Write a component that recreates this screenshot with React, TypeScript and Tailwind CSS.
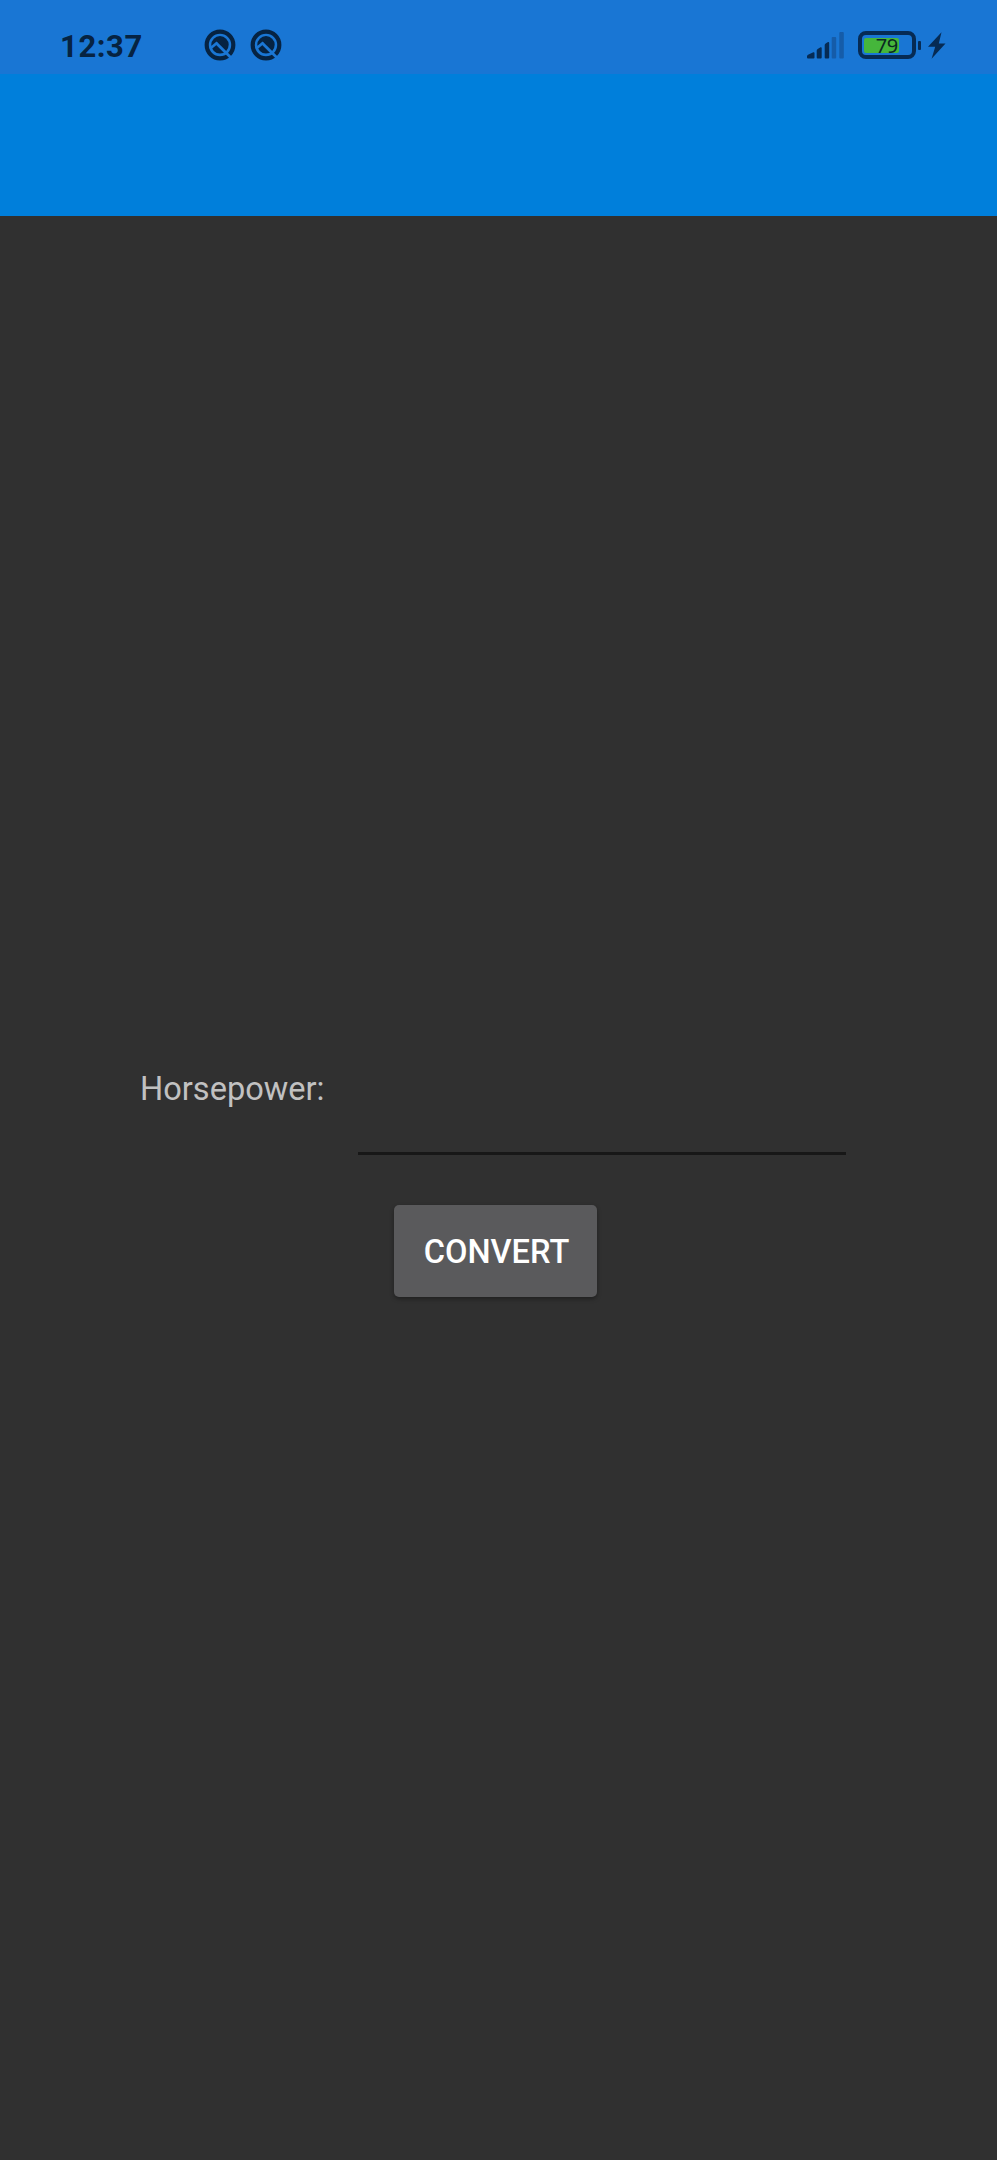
function QIcon() {
  return (
    <svg className="h-8 w-8" viewBox="0 0 32 32" fill="none">
      <circle cx="16" cy="16" r="13.300" stroke="#062342" strokeWidth="4.200" />
      <circle cx="16" cy="15.800" r="8.700" fill="#062342" />
      <path d="M12.400 14.200 28.500 30.300" stroke="#1b77d5" strokeWidth="2.800" />
      <path d="m6 19.800 7.400-6.400" stroke="#1b77d5" strokeWidth="2.600" />
      <path d="m10.200 20.600 2.500-2.300 5 5q-4.500 1.300-7.500-2.700Z" fill="#062342" />
    </svg>
  );
}

function SignalIcon() {
  return (
    <svg className="h-[27px] w-[38px]" viewBox="0 0 38 27">
      <path d="M0 25.500v-1.200q0-1 1-1.500l5.300-2.600q1.200-.3 1.200.8v4.500q0 1-1 1H1q-1 0-1-1Z" fill="#062b54" />
      <path d="M9.700 18.500q0-1 1-1.500l2.800-1.700q1.200-.3 1.200.8v9.400q0 1-1 1h-3q-1 0-1-1Z" fill="#062b54" />
      <path d="M17.700 13q0-1 1-1.600l2.300-1.300q1.200-.3 1.200.8v14.600q0 1-1 1h-2.500q-1 0-1-1Z" fill="#062b54" />
      <rect x="24.700" y="5" width="4.500" height="21.500" rx="1" fill="#155ca9" />
      <rect x="32.300" y="0" width="4.500" height="26.500" rx="1" fill="#155ca9" />
    </svg>
  );
}

function Battery() {
  return (
    <div className="flex items-center">
      <div className="flex h-7 w-[58px] items-center rounded-[8px] border-4 border-[#062b54] pl-[2px]">
        <div className="flex h-[15px] w-[35px] items-center justify-end rounded-[2px] bg-[#45b63b] pt-[2px] pr-px font-['Noto_Sans',sans-serif] text-[20px] leading-none tracking-[-0.3px] text-[#0a2a22]">
          79
        </div>
      </div>
      <div className="ml-[2px] h-[9px] w-[3px] rounded-[1px] bg-[#062b54]" />
      <svg className="ml-[7px] h-[27px] w-[18px]" viewBox="0 0 18 27">
        <path d="M13.500.3 0 14.700h7.200L3.600 26.700 17.500 11.500h-6.700Z" fill="#062b54" />
      </svg>
    </div>
  );
}

export default function App() {
  return (
    <div className="flex h-[2160px] w-[997px] flex-col overflow-hidden bg-[#303030] font-['Roboto',sans-serif]">
      <header className="flex h-[74px] shrink-0 justify-between bg-[#1976d4] pr-[51px] pl-[60px]">
        <div className="flex">
          <span className="w-[144px] pt-[29px] text-[31px] leading-9 font-bold tracking-[0.6px] text-[#062342]">12:37</span>
          <div className="flex gap-[14px] pt-[29px]">
            <QIcon />
            <QIcon />
          </div>
        </div>
        <div className="flex items-start pt-[31px]">
          <div className="mr-[13px] pt-px">
            <SignalIcon />
          </div>
          <Battery />
        </div>
      </header>
      <div className="h-[142px] shrink-0 bg-[#007fdb]" />
      <main className="flex flex-col pt-[850px]">
        <label className="flex h-[89px] pl-[140px]">
          <span className="w-[218px] pt-[4px] text-[32.6px] leading-[38px] text-[#c1c1c1]">Horsepower:</span>
          <input className="h-[89px] w-[488px] border-b-[3px] border-[#171717] bg-transparent text-[32px] text-white outline-none" />
        </label>
        <button className="mt-[50px] ml-[394px] h-[92px] w-[203px] rounded-[5px] bg-[#5a5a5c] pt-[3px] pl-[2px] text-[32.6px] font-medium text-white shadow-[0_2px_4px_rgba(0,0,0,0.35)]">
          CONVERT
        </button>
      </main>
    </div>
  );
}
